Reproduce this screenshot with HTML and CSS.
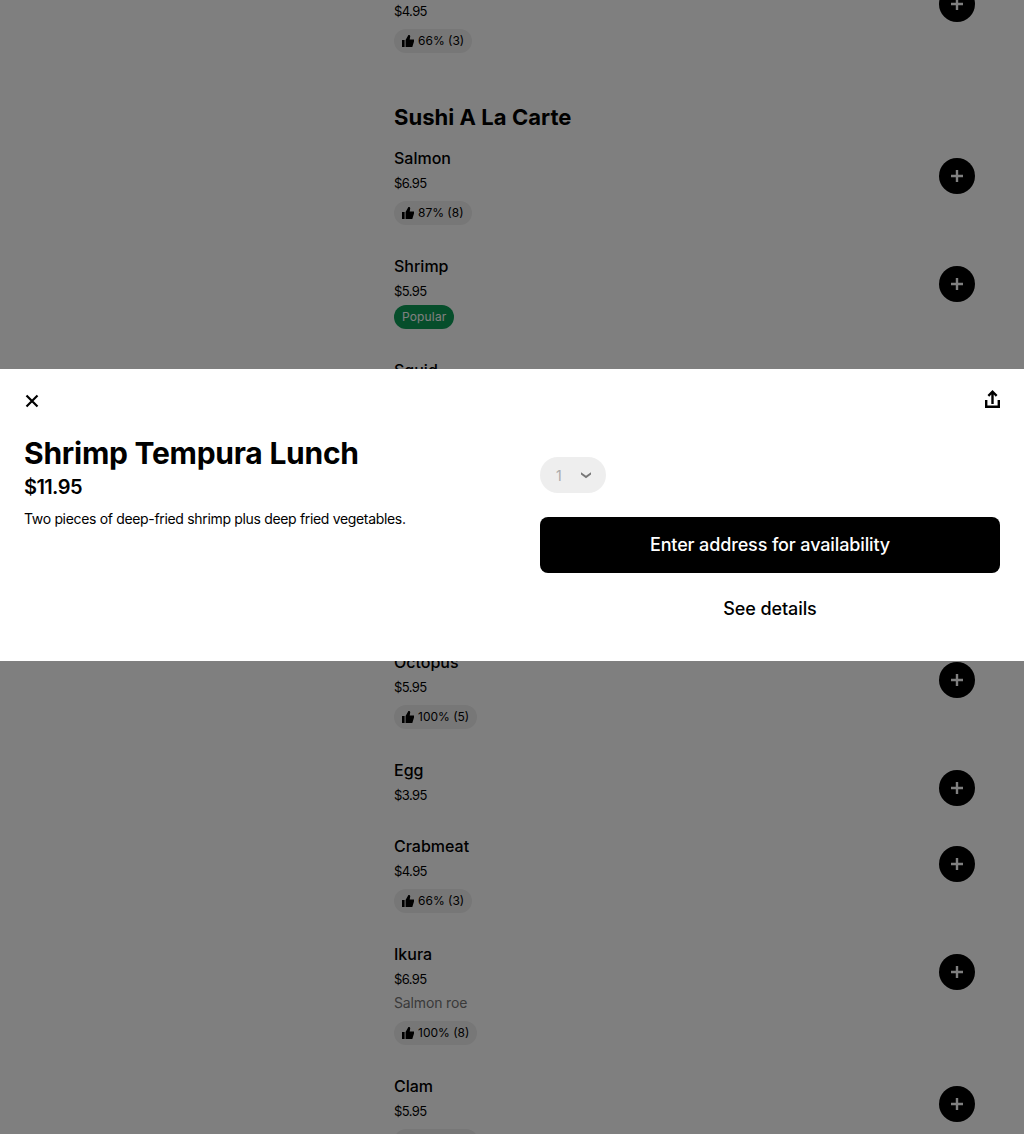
FILE: index.html
```html
<!DOCTYPE html>
<html lang="en">
<head>
<meta charset="utf-8">
<title>Shrimp Tempura Lunch</title>
<link rel="stylesheet" href="styles.css">
</head>
<body>
<svg class="defs" width="0" height="0" aria-hidden="true">
  <symbol id="thumb" viewBox="0 0 12 12"><path d="M0 5h2.600v7H0zM3.600 12V5L6.400 0h.5c.9 0 1.500.7 1.300 1.600L7.700 4.400H12v2.200L10.300 12z"/></symbol>
  <symbol id="plus" viewBox="0 0 12 12"><path d="M4.800 0h2.400v4.800H12v2.400H7.200V12H4.800V7.200H0V4.800h4.800z"/></symbol>
</svg>
<main class="menu">
  <article class="item">
    <div class="info"><h3 class="name">Crabmeat</h3><p class="price">$4.95</p>
      <span class="rating"><svg class="thumb"><use href="#thumb"/></svg>66% (3)</span></div>
    <button class="add"><svg class="plus"><use href="#plus"/></svg></button>
  </article>
  <h2 class="section">Sushi A La Carte</h2>
  <article class="item">
    <div class="info"><h3 class="name">Salmon</h3><p class="price">$6.95</p>
      <span class="rating"><svg class="thumb"><use href="#thumb"/></svg>87% (8)</span></div>
    <button class="add"><svg class="plus"><use href="#plus"/></svg></button>
  </article>
  <article class="item">
    <div class="info"><h3 class="name">Shrimp</h3><p class="price">$5.95</p>
      <span class="popular">Popular</span></div>
    <button class="add"><svg class="plus"><use href="#plus"/></svg></button>
  </article>
  <article class="item item-covered">
    <div class="info"><h3 class="name">Squid</h3></div>
  </article>
  <article class="item">
    <div class="info"><h3 class="name">Octopus</h3><p class="price">$5.95</p>
      <span class="rating"><svg class="thumb"><use href="#thumb"/></svg>100% (5)</span></div>
    <button class="add"><svg class="plus"><use href="#plus"/></svg></button>
  </article>
  <article class="item">
    <div class="info"><h3 class="name">Egg</h3><p class="price">$3.95</p></div>
    <button class="add"><svg class="plus"><use href="#plus"/></svg></button>
  </article>
  <article class="item">
    <div class="info"><h3 class="name">Crabmeat</h3><p class="price">$4.95</p>
      <span class="rating"><svg class="thumb"><use href="#thumb"/></svg>66% (3)</span></div>
    <button class="add"><svg class="plus"><use href="#plus"/></svg></button>
  </article>
  <article class="item">
    <div class="info"><h3 class="name">Ikura</h3><p class="price">$6.95</p><p class="desc">Salmon roe</p>
      <span class="rating"><svg class="thumb"><use href="#thumb"/></svg>100% (8)</span></div>
    <button class="add"><svg class="plus"><use href="#plus"/></svg></button>
  </article>
  <article class="item">
    <div class="info"><h3 class="name">Clam</h3><p class="price">$5.95</p>
      <span class="rating rating-blank">&nbsp;</span></div>
    <button class="add"><svg class="plus"><use href="#plus"/></svg></button>
  </article>
</main>
<div class="scrim"></div>
<section class="dialog">
  <header class="dialog-bar">
    <button class="icon-btn" aria-label="Close">
      <svg class="close-icon" width="24" height="24" viewBox="0 0 24 24"><path d="M6.500 6.500 17.500 17.500M17.500 6.500 6.500 17.500"/></svg>
    </button>
    <button class="icon-btn" aria-label="Share">
      <svg width="24" height="24" viewBox="0 0 24 24"><path d="M12.500 1 17.500 6l-1.700 1.700-2.100-2.100V15h-2.400V5.600L9.200 7.700 7.500 6zM5 11h2.400v5.600h10.200V11H20v8H5z"/></svg>
    </button>
  </header>
  <div class="dialog-body">
    <div class="details">
      <h1 class="title">Shrimp Tempura Lunch</h1>
      <p class="dialog-price">$11.95</p>
      <p class="dialog-desc">Two pieces of deep-fried shrimp plus deep fried vegetables.</p>
    </div>
    <div class="actions">
      <div class="qty"><span>1</span>
        <svg width="12" height="8" viewBox="0 0 12 8"><path d="M1 1.200 6 4.800l5-3.600v2.400L6 7.200 1 3.600z"/></svg>
      </div>
      <button class="primary">Enter address for availability</button>
      <button class="secondary">See details</button>
    </div>
  </div>
</section>
</body>
</html>
```
FILE: styles.css
```css
* { box-sizing: border-box; }
html, body { margin: 0; height: 100%; overflow: hidden; background: #fff; }
body { font-family: Inter, "Liberation Sans", sans-serif; color: #000; }
.defs { position: absolute; }
h1, h2, h3, p { margin: 0; font-weight: 400; }
button { font: inherit; border: 0; background: none; padding: 0; color: inherit; }

.menu { width: 581px; margin: -26px 0 0 394px; }
.section { font-size: 22px; line-height: 32px; font-weight: 700; letter-spacing: 0.05px; margin: 19px 0 13px; }
.item { display: flex; justify-content: space-between; align-items: flex-start; }
.item-covered { height: 292px; }
.info { display: flex; flex-direction: column; align-items: flex-start; padding-bottom: 29px; }
.name { font-size: 16px; line-height: 24px; font-weight: 450; }
.price { font-size: 13px; line-height: 20px; margin-top: 3px; letter-spacing: -0.6px; }
.desc { font-size: 14px; line-height: 20px; margin-top: 4px; color: #757575; letter-spacing: -0.15px; }
.rating { display: flex; align-items: center; gap: 4px; height: 24px; margin-top: 8px; padding: 0 8px; border-radius: 12px; background: #eee; font-size: 12px; line-height: 24px; }
.rating-blank { width: 84px; }
.thumb { width: 12px; height: 12px; }
.popular { display: block; height: 24px; margin-top: 4px; padding: 0 8px; border-radius: 12px; background: #0c9c56; color: #fff; font-size: 12px; line-height: 24px; letter-spacing: 0.15px; }
.add { width: 36px; height: 36px; margin-top: 12px; border-radius: 50%; background: #000; display: flex; align-items: center; justify-content: center; }
.plus { width: 12px; height: 12px; fill: #fff; }

.scrim { position: fixed; inset: 0; background: rgba(0, 0, 0, 0.5); }
.dialog { position: fixed; left: 0; right: 0; top: 369px; height: 292px; background: #fff; padding: 20px 24px 0; }
.dialog-bar { display: flex; justify-content: space-between; height: 24px; }
.icon-btn { width: 16px; height: 24px; display: flex; justify-content: center; }
.icon-btn svg { flex: none; }
.close-icon { fill: none; stroke: #000; stroke-width: 2.2; }
.dialog-body { display: grid; grid-template-columns: 1fr 460px; column-gap: 24px; }
.details { padding-top: 20px; }
.title { font-size: 30px; line-height: 40px; font-weight: 700; letter-spacing: -0.25px; }
.dialog-price { font-size: 20px; line-height: 26px; font-weight: 600; letter-spacing: -0.6px; margin-top: 1px; }
.dialog-desc { font-size: 14px; line-height: 20px; margin-top: 9px; letter-spacing: -0.33px; }
.actions { display: flex; flex-direction: column; align-items: stretch; padding-top: 44px; }
.qty { width: 66px; height: 36px; border-radius: 18px; background: #eee; display: flex; align-items: center; justify-content: space-between; padding: 0 14px 0 16px; color: #aaa; font-size: 14px; }
.qty svg { fill: #777; }
.primary { height: 56px; margin-top: 24px; padding-bottom: 2px; border-radius: 8px; background: #000; color: #fff; font-size: 18px; font-weight: 500; letter-spacing: -0.13px; }
.secondary { height: 56px; margin-top: 8px; padding-bottom: 2px; font-size: 18px; font-weight: 500; letter-spacing: -0.1px; }
```
